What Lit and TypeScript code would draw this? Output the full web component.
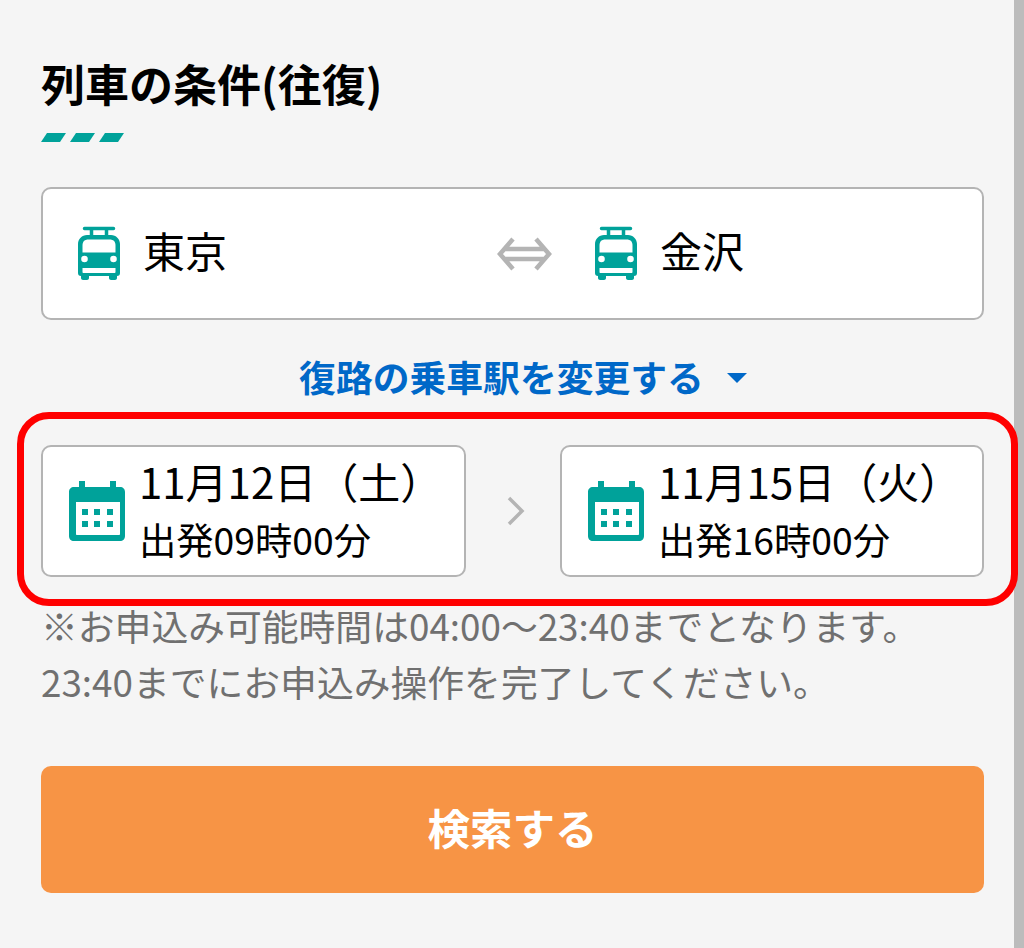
import { LitElement, css, html, svg } from 'lit';
import { customElement } from 'lit/decorators.js';

const TEAL = '#00a29a';

const trainIcon = html`
  <svg class="train" viewBox="0 0 42 54" width="42" height="54">
    <path d="M6.500 2.500h29M13.500 3v7M28.500 3v7" fill="none" stroke="${TEAL}" stroke-width="3.500" stroke-linecap="round"/>
    <path fill="${TEAL}" fill-rule="evenodd" d="M9 9h24c5 0 9 4 9 9v29c0 2-1 3-3 3H3c-2 0-3-1-3-3V18c0-5 4-9 9-9zm1.500 4.500c-4 0-6 2-6 6v7h33v-7c0-4-2-6-6-6zM4.500 42v4c0 .6.4 1 1 1h31c.6 0 1-.4 1-1v-4zm-1.300-9a3.300 3.300 0 1 0 6.600 0a3.300 3.300 0 1 0-6.600 0zm29 0a3.300 3.300 0 1 0 6.600 0a3.300 3.300 0 1 0-6.600 0z"/>
    <path fill="${TEAL}" d="M3 49h8v3c0 1-1 2-2 2H5c-1 0-2-1-2-2zM31 49h8v3c0 1-1 2-2 2h-4c-1 0-2-1-2-2z"/>
  </svg>
`;

const calendarCells = [
  [13, 28], [25, 28], [38, 28],
  [13, 40], [25, 40], [38, 40],
];

const calendarIcon = html`
  <svg class="calendar" viewBox="0 0 56 60" width="56" height="60">
    <path fill="${TEAL}" fill-rule="evenodd" d="M10 0h6v6h25V0h6v6h4c3 0 5 2 5 5v44c0 3-2 5-5 5H5c-3 0-5-2-5-5V11c0-3 2-5 5-5h5zM7 21v32c0 .6.4 1 1 1h42c.6 0 1-.4 1-1V21z"/>
    ${calendarCells.map(([x, y]) => svg`<rect x="${x}" y="${y}" width="6" height="6" fill="${TEAL}"/>`)}
  </svg>
`;

@customElement('app-root')
export class AppRoot extends LitElement {
  static styles = css`
    :host {
      display: block;
      height: 948px;
      background-color: #f5f5f5;
      font-family: "Noto Sans CJK JP", "Noto Sans", sans-serif;
      color: #000;
      overflow: hidden;
    }
    .page {
      box-sizing: border-box;
      height: 948px;
      padding: 56px 30px 0 41px;
      border-right: 10px solid #bcbcbc;
    }
    .title {
      margin: 0;
      font-size: 44px;
      line-height: 54px;
      font-weight: 700;
    }
    .dashes {
      display: flex;
      gap: 4px;
      margin-top: 23px;
      height: 9px;
    }
    .dashes span {
      width: 25px;
      background-color: #00a29a;
      clip-path: polygon(6px 0, 100% 0, calc(100% - 6px) 100%, 0 100%);
    }
    .route {
      display: flex;
      align-items: center;
      box-sizing: border-box;
      height: 133px;
      margin-top: 45px;
      padding: 0 35px;
      background: #fff;
      border: 2px solid #b4b4b4;
      border-radius: 10px;
      font-size: 42px;
    }
    .station {
      display: flex;
      align-items: center;
      gap: 23px;
    }
    .station.from {
      width: 419px;
    }
    .station span {
      padding-bottom: 8px;
    }
    .train {
      display: block;
      margin-bottom: 2px;
    }
    .swap {
      display: block;
      margin-right: 43px;
    }
    .change {
      display: flex;
      justify-content: center;
      align-items: center;
      gap: 23px;
      box-sizing: border-box;
      height: 125px;
      padding: 0 0 14px 21px;
      color: #0068c8;
      font-size: 36.800px;
      font-weight: 700;
    }
    .arrow {
      width: 0;
      height: 0;
      margin-top: 4px;
      border-left: 10px solid transparent;
      border-right: 10px solid transparent;
      border-top: 10px solid #0068c8;
    }
    .dates {
      position: relative;
      display: flex;
      align-items: center;
      justify-content: space-between;
    }
    .dates::after {
      content: '';
      position: absolute;
      left: -24px;
      right: -34px;
      top: -33px;
      bottom: -29px;
      border: 7px solid #ff0000;
      border-radius: 32px;
      pointer-events: none;
    }
    .date {
      display: flex;
      align-items: center;
      gap: 14px;
      box-sizing: border-box;
      width: 424px;
      height: 132px;
      padding-left: 26px;
      background: #fff;
      border: 2px solid #b4b4b4;
      border-radius: 10px;
    }
    .date.out {
      width: 425px;
    }
    .date-main {
      font-size: 42px;
      line-height: 56px;
    }
    .date-sub {
      font-size: 37.300px;
      line-height: 60px;
    }
    .chevron {
      margin-left: 6px;
    }
    .note {
      margin: 20px 0 0;
      color: #707070;
      font-size: 36.800px;
      line-height: 56px;
    }
    .search {
      display: block;
      width: 100%;
      height: 127px;
      margin-top: 57px;
      padding: 0 0 6px;
      border: none;
      border-radius: 10px;
      background-color: #f79445;
      color: #fff;
      font-family: inherit;
      font-size: 42.500px;
      font-weight: 700;
    }
  `;

  render () {
    return html`
      <div class="page">
        <h1 class="title">列車の条件(往復)</h1>
        <div class="dashes"><span></span><span></span><span></span></div>
        <div class="route">
          <div class="station from">${trainIcon}<span>東京</span></div>
          <svg class="swap" viewBox="0 0 55 34" width="55" height="34">
            <path d="M16 2L3 17l13 15M39 2l13 15-13 15M8 12h39M8 22h39" fill="none" stroke="#b4b4b4" stroke-width="4.500"/>
          </svg>
          <div class="station">${trainIcon}<span>金沢</span></div>
        </div>
        <div class="change"><span>復路の乗車駅を変更する</span><span class="arrow"></span></div>
        <div class="dates">
          <div class="date out">
            ${calendarIcon}
            <div>
              <div class="date-main">11月12日（土）</div>
              <div class="date-sub">出発09時00分</div>
            </div>
          </div>
          <svg class="chevron" viewBox="0 0 18 30" width="18" height="30">
            <path d="M2 2l13 13L2 28" fill="none" stroke="#b4b4b4" stroke-width="3.500"/>
          </svg>
          <div class="date">
            ${calendarIcon}
            <div>
              <div class="date-main">11月15日（火）</div>
              <div class="date-sub">出発16時00分</div>
            </div>
          </div>
        </div>
        <p class="note">※お申込み可能時間は04:00〜23:40までとなります。<br>23:40までにお申込み操作を完了してください。</p>
        <button class="search">検索する</button>
      </div>
    `;
  }
}
